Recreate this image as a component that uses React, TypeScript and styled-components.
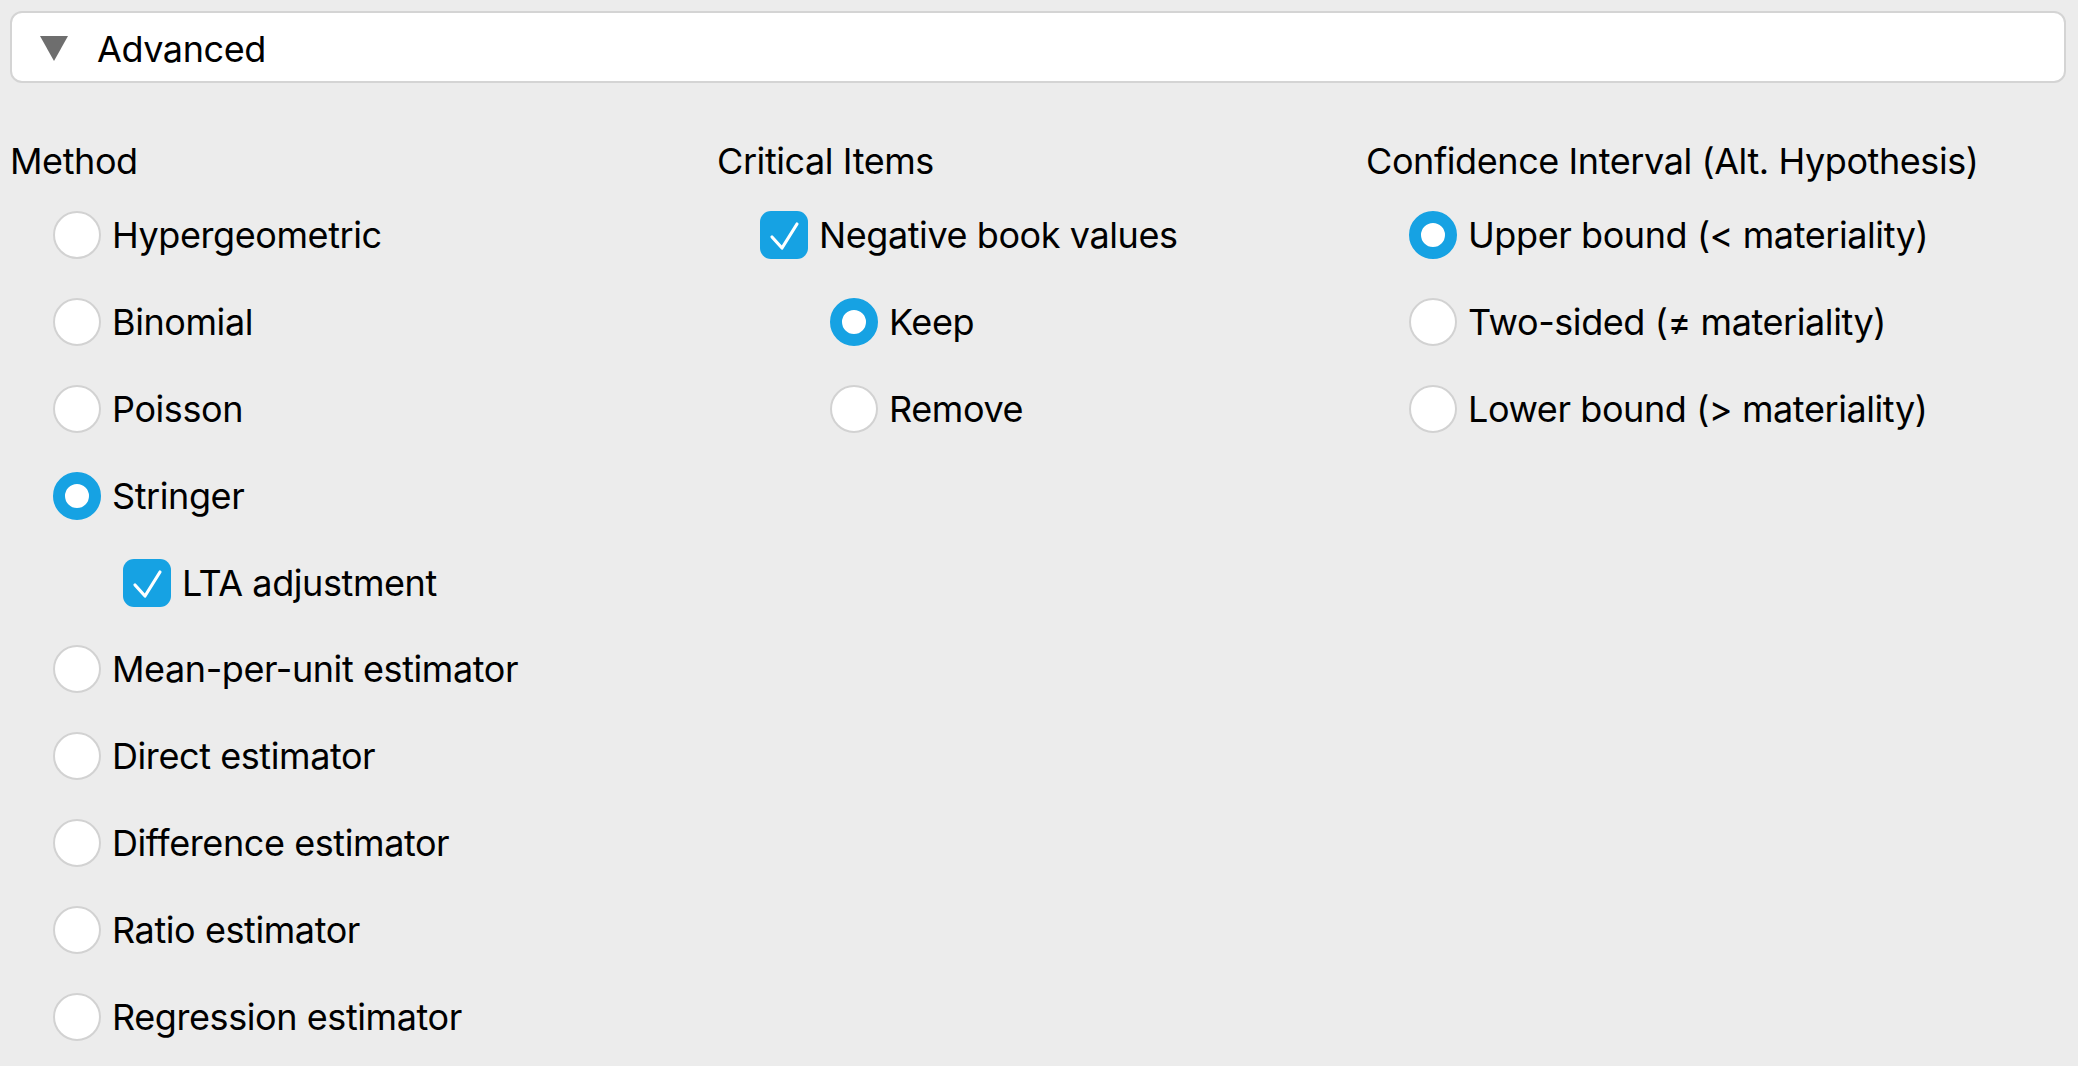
import React from "react";
import styled, { createGlobalStyle } from "styled-components";

const GlobalStyle = createGlobalStyle`
  html, body {
    margin: 0;
    padding: 0;
    background: #ececec;
  }
  body {
    font-family: Inter, "Noto Sans", "Liberation Sans", sans-serif;
    color: #000;
    letter-spacing: -0.026em;
  }
`;

const Page = styled.div`
  padding: 11px 12px 0 10px;
  min-height: 1066px;
  box-sizing: border-box;
  background: #ececec;
`;

const Summary = styled.div`
  height: 72px;
  box-sizing: border-box;
  background: #ffffff;
  border: 2px solid #d4d4d4;
  border-radius: 12px;
  display: flex;
  align-items: center;
  gap: 29px;
  padding-left: 28px;
`;

const Triangle = styled.span`
  width: 0;
  height: 0;
  border-left: 14.5px solid transparent;
  border-right: 14.5px solid transparent;
  border-top: 25px solid #6e6e6e;
  margin-top: 3px;
`;

const SummaryText = styled.span`
  font-size: 36px;
  line-height: 44px;
  padding-top: 4px;
`;

const Columns = styled.div`
  display: grid;
  grid-template-columns: 707px 649px 1fr;
  margin-top: 56px;
`;

const Section = styled.div`
  display: flex;
  flex-direction: column;
`;

const Title = styled.div`
  font-size: 36px;
  line-height: 44px;
  white-space: nowrap;
`;

const List = styled.div`
  display: flex;
  flex-direction: column;
  gap: 38.9px;
  margin-top: 28px;
  padding-left: 43px;
`;

const Row = styled.label<{ $indent?: number }>`
  display: flex;
  align-items: center;
  gap: 11px;
  height: 48px;
  margin-left: ${(p) => p.$indent ?? 0}px;
`;

const Label = styled.span`
  font-size: 36px;
  line-height: 48px;
  white-space: nowrap;
`;

const Radio = styled.span<{ $on?: boolean }>`
  width: 48px;
  height: 48px;
  flex: none;
  box-sizing: border-box;
  border-radius: 50%;
  background: #ffffff;
  border: ${(p) => (p.$on ? "12px solid #16a2e3" : "2px solid #d2d2d2")};
`;

const Box = styled.span`
  width: 48px;
  height: 48px;
  flex: none;
  border-radius: 11px;
  background: #16a2e3;
  display: flex;
  align-items: center;
  justify-content: center;
`;

const Check = () => (
  <Box>
    <svg width="48" height="48" viewBox="0 0 48 48">
      <polyline
        points="12,26 22,37 37,13"
        fill="none"
        stroke="#ffffff"
        strokeWidth="3.2"
        strokeLinecap="round"
        strokeLinejoin="round"
      />
    </svg>
  </Box>
);

type Item = { kind: "radio" | "check"; text: string; on?: boolean; indent?: number };

const method: Item[] = [
  { kind: "radio", text: "Hypergeometric" },
  { kind: "radio", text: "Binomial" },
  { kind: "radio", text: "Poisson" },
  { kind: "radio", text: "Stringer", on: true },
  { kind: "check", text: "LTA adjustment", on: true, indent: 70 },
  { kind: "radio", text: "Mean-per-unit estimator" },
  { kind: "radio", text: "Direct estimator" },
  { kind: "radio", text: "Difference estimator" },
  { kind: "radio", text: "Ratio estimator" },
  { kind: "radio", text: "Regression estimator" },
];

const critical: Item[] = [
  { kind: "check", text: "Negative book values", on: true },
  { kind: "radio", text: "Keep", on: true, indent: 70 },
  { kind: "radio", text: "Remove", indent: 70 },
];

const confidence: Item[] = [
  { kind: "radio", text: "Upper bound (< materiality)", on: true },
  { kind: "radio", text: "Two-sided (≠ materiality)" },
  { kind: "radio", text: "Lower bound (> materiality)" },
];

const Group = ({ title, items }: { title: string; items: Item[] }) => (
  <Section>
    <Title>{title}</Title>
    <List>
      {items.map((it) => (
        <Row key={it.text} $indent={it.indent}>
          {it.kind === "radio" ? <Radio $on={it.on} /> : <Check />}
          <Label>{it.text}</Label>
        </Row>
      ))}
    </List>
  </Section>
);

export default function App() {
  return (
    <>
      <GlobalStyle />
      <Page>
        <Summary>
          <Triangle />
          <SummaryText>Advanced</SummaryText>
        </Summary>
        <Columns>
          <Group title="Method" items={method} />
          <Group title="Critical Items" items={critical} />
          <Group title="Confidence Interval (Alt. Hypothesis)" items={confidence} />
        </Columns>
      </Page>
    </>
  );
}
